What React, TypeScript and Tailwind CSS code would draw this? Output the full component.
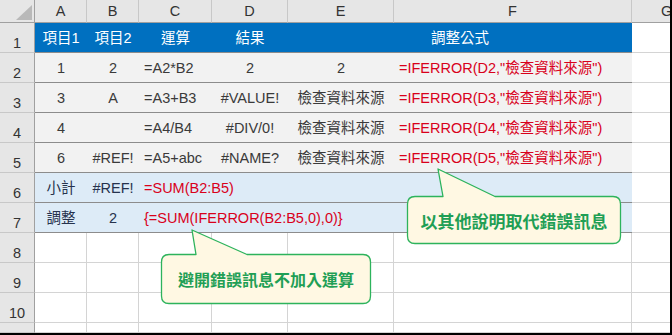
import React from "react";

type Cell = { t?: string; a?: "c" | "l"; red?: boolean; span?: number };

const COLS = [52, 52, 73, 76, 106, 238];
const LETTERS = ["A", "B", "C", "D", "E", "F"];

const dataRows: { bg: string; text: string; cells: Cell[] }[] = [
  {
    bg: "bg-[#0070c0]",
    text: "text-white",
    cells: [
      { t: "項目1", a: "c" },
      { t: "項目2", a: "c" },
      { t: "運算", a: "c" },
      { t: "結果", a: "c" },
      { t: "調整公式", a: "c", span: 2 },
    ],
  },
  {
    bg: "bg-[#f2f2f2]",
    text: "text-[#3a3a3a]",
    cells: [
      { t: "1", a: "c" },
      { t: "2", a: "c" },
      { t: "=A2*B2", a: "l" },
      { t: "2", a: "c" },
      { t: "2", a: "c" },
      { t: '=IFERROR(D2,"檢查資料來源")', a: "l", red: true },
    ],
  },
  {
    bg: "bg-[#f2f2f2]",
    text: "text-[#3a3a3a]",
    cells: [
      { t: "3", a: "c" },
      { t: "A", a: "c" },
      { t: "=A3+B3", a: "l" },
      { t: "#VALUE!", a: "c" },
      { t: "檢查資料來源", a: "c" },
      { t: '=IFERROR(D3,"檢查資料來源")', a: "l", red: true },
    ],
  },
  {
    bg: "bg-[#f2f2f2]",
    text: "text-[#3a3a3a]",
    cells: [
      { t: "4", a: "c" },
      { t: "", a: "c" },
      { t: "=A4/B4", a: "l" },
      { t: "#DIV/0!", a: "c" },
      { t: "檢查資料來源", a: "c" },
      { t: '=IFERROR(D4,"檢查資料來源")', a: "l", red: true },
    ],
  },
  {
    bg: "bg-[#f2f2f2]",
    text: "text-[#3a3a3a]",
    cells: [
      { t: "6", a: "c" },
      { t: "#REF!", a: "c" },
      { t: "=A5+abc", a: "l" },
      { t: "#NAME?", a: "c" },
      { t: "檢查資料來源", a: "c" },
      { t: '=IFERROR(D5,"檢查資料來源")', a: "l", red: true },
    ],
  },
  {
    bg: "bg-[#ddebf7]",
    text: "text-[#26324d]",
    cells: [
      { t: "小計", a: "c" },
      { t: "#REF!", a: "c" },
      { t: "=SUM(B2:B5)", a: "l", red: true, span: 4 },
    ],
  },
  {
    bg: "bg-[#ddebf7]",
    text: "text-[#26324d]",
    cells: [
      { t: "調整", a: "c" },
      { t: "2", a: "c" },
      { t: "{=SUM(IFERROR(B2:B5,0),0)}", a: "l", red: true, span: 4 },
    ],
  },
];

function RowHeader({ n, h = "h-[30px]" }: { n: string; h?: string }) {
  return (
    <div
      className={`w-[35px] ${h} shrink-0 bg-[#e6e6e6] border-r border-b border-r-[#a0a0a0] border-b-[#c8c8c8] flex items-end justify-center pb-[2px] text-[#333] text-[14.5px] leading-none`}
    >
      {n}
    </div>
  );
}

export default function App() {
  return (
    <div
      className="relative w-[672px] h-[335px] overflow-hidden bg-white border-r-2 border-b-2 border-black"
      style={{ fontFamily: '"Liberation Sans", "Noto Sans CJK TC", sans-serif' }}
    >
      {/* column header */}
      <div className="flex h-[23px]">
        <div className="relative w-[35px] h-[23px] shrink-0 bg-[#e6e6e6] border-r border-b border-r-[#a0a0a0] border-b-[#a0a0a0]">
          <svg className="absolute left-[16px] top-[5px]" width="16" height="15" viewBox="0 0 16 15">
            <polygon points="16,0 16,15 0,15" fill="#b9b9b9" />
          </svg>
        </div>
        {LETTERS.map((l, i) => (
          <div
            key={l}
            style={{ width: COLS[i] }}
            className="shrink-0 h-[23px] bg-[#e6e6e6] border-r border-b border-r-[#c8c8c8] border-b-[#a0a0a0] flex items-center justify-center text-[#333] text-[14.5px] leading-none"
          >
            {l}
          </div>
        ))}
        <div className="flex-1 h-[23px] bg-[#e6e6e6] border-b border-b-[#a0a0a0] flex items-center pl-[29px] text-[#333] text-[14.5px] leading-none overflow-hidden">
          G
        </div>
      </div>

      {/* data rows */}
      {dataRows.map((r, ri) => {
        let col = 0;
        return (
          <div key={ri} className="flex h-[30px]">
            <RowHeader n={String(ri + 1)} />
            {r.cells.map((c, ci) => {
              const span = c.span ?? 1;
              let w = 0;
              for (let k = 0; k < span; k++) w += COLS[col + k];
              col += span;
              return (
                <div
                  key={ci}
                  style={{ width: w }}
                  className={`shrink-0 h-[30px] border-b border-b-[#8c8c8c] ${r.bg} flex items-center ${
                    c.a === "c" ? "justify-center" : "pl-[5px]"
                  } text-[14.5px] leading-none whitespace-nowrap pt-[1px] ${c.red ? "text-[#d9001b]" : r.text}`}
                >
                  {c.t}
                </div>
              );
            })}
            <div className="flex-1 h-[30px] border-b border-b-[#d4d4d4] bg-white" />
          </div>
        );
      })}

      {/* empty rows */}
      {[8, 9, 10, 11].map((n) => (
        <div key={n} className={`flex ${n === 11 ? "h-[10px]" : "h-[30px]"}`}>
          <RowHeader n={n === 11 ? "" : String(n)} h={n === 11 ? "h-[10px]" : "h-[30px]"} />
          {COLS.map((w, i) => (
            <div
              key={i}
              style={{ width: w }}
              className={`shrink-0 ${n === 11 ? "h-[10px]" : "h-[30px]"} border-r border-b border-[#d4d4d4] bg-white`}
            />
          ))}
          <div className={`flex-1 ${n === 11 ? "h-[10px]" : "h-[30px]"} border-b border-[#d4d4d4] bg-white`} />
        </div>
      ))}

      {/* callouts */}
      <svg className="absolute left-0 top-0 pointer-events-none" width="672" height="335" viewBox="0 0 672 335">
        <path
          d="M 415 196.5 L 443 196.5 L 438 169 L 495 196.5 L 613 196.5 Q 620.5 196.5 620.5 204 L 620.5 236 Q 620.5 243.5 613 243.5 L 415 243.5 Q 407.5 243.5 407.5 236 L 407.5 204 Q 407.5 196.5 415 196.5 Z"
          fill="#fff8e3"
          stroke="#2db35c"
          strokeWidth="1.3"
          strokeLinejoin="round"
        />
        <path
          d="M 169 254.5 L 196 254.5 L 192 230 L 247 254.5 L 363 254.5 Q 370.5 254.5 370.5 262 L 370.5 296 Q 370.5 303.5 363 303.5 L 169 303.5 Q 161.5 303.5 161.5 296 L 161.5 262 Q 161.5 254.5 169 254.5 Z"
          fill="#fff8e3"
          stroke="#2db35c"
          strokeWidth="1.3"
          strokeLinejoin="round"
        />
      </svg>
      <div
        className="absolute left-[408px] top-[197px] w-[212px] h-[46px] flex items-center justify-center text-[17px] font-bold text-[#1f9f55] leading-none"
        style={{ fontFamily: '"Noto Sans CJK TC", sans-serif' }}
      >
        以其他說明取代錯誤訊息
      </div>
      <div
        className="absolute left-[162px] top-[255px] w-[208px] h-[48px] flex items-center justify-center text-[16px] font-bold text-[#1f9f55] leading-none"
        style={{ fontFamily: '"Noto Sans CJK TC", sans-serif' }}
      >
        避開錯誤訊息不加入運算
      </div>
    </div>
  );
}
